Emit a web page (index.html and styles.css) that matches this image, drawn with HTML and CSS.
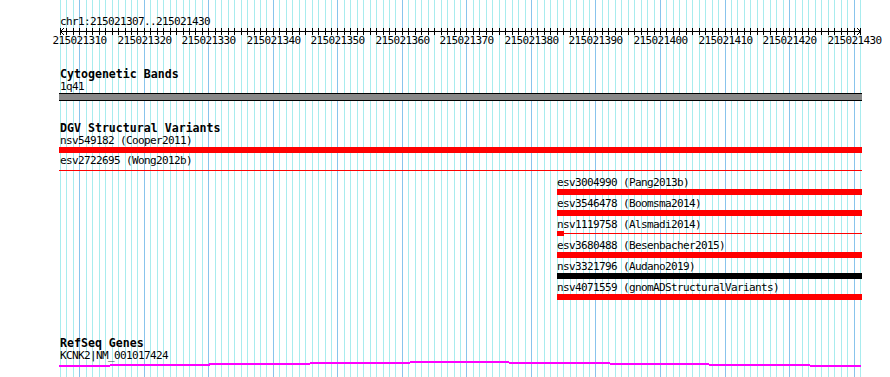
FILE: index.html
```html
<!DOCTYPE html>
<html lang="en">
<head>
  <meta charset="UTF-8">
  <meta name="viewport" content="width=device-width, initial-scale=1.0">
  <title>chr1:215021307..215021430</title>
  <link rel="stylesheet" href="styles.css">
</head>
<body>
  <div class="view">
    <!-- base pair grid, filled by script.js -->
    <svg id="grid" class="grid" width="890" height="377"></svg>

    <div class="tracks">
      <div class="location">chr1:215021307..215021430</div>
      <svg id="ruler" class="ruler" width="890" height="20">
        <line class="axis" x1="60" y1="4.5" x2="861" y2="4.5"></line>
        <polyline class="axis" points="64,1 60.5,4.5 64,8"></polyline>
        <polyline class="axis" points="857,1 860.5,4.5 857,8"></polyline>
      </svg>

      <section class="track cyto">
        <h3 class="track-title">Cytogenetic Bands</h3>
        <div class="label">1q41</div>
        <div class="band"></div>
      </section>

      <section class="track dgv">
        <h3 class="track-title">DGV Structural Variants</h3>
        <div class="feature first">
          <div class="label">nsv549182 (Cooper2011)</div>
          <div class="bar"></div>
        </div>
        <div class="feature second">
          <div class="label">esv2722695 (Wong2012b)</div>
          <div class="bar-area"><div class="thin"></div></div>
        </div>
        <div class="feature third" style="margin-left: 498px;">
          <div class="label">esv3004990 (Pang2013b)</div>
          <div class="bar"></div>
        </div>
        <div class="feature" style="margin-left: 498px;">
          <div class="label">esv3546478 (Boomsma2014)</div>
          <div class="bar"></div>
        </div>
        <div class="feature" style="margin-left: 498px;">
          <div class="label">nsv1119758 (Alsmadi2014)</div>
          <div class="bar-area">
            <div class="thin small"></div>
            <div class="block" style="width: 7px;"></div>
          </div>
        </div>
        <div class="feature" style="margin-left: 498px;">
          <div class="label">esv3680488 (Besenbacher2015)</div>
          <div class="bar"></div>
        </div>
        <div class="feature" style="margin-left: 498px;">
          <div class="label">nsv3321796 (Audano2019)</div>
          <div class="bar black"></div>
        </div>
        <div class="feature" style="margin-left: 498px;">
          <div class="label">nsv4071559 (gnomADStructuralVariants)</div>
          <div class="bar"></div>
        </div>
      </section>

      <section class="track refseq">
        <h3 class="track-title">RefSeq Genes</h3>
        <div class="label">KCNK2|NM_001017424</div>
        <svg class="gene" width="803" height="7">
          <rect x="0" y="4" width="51" height="2"></rect>
          <rect x="51" y="3" width="100" height="2"></rect>
          <rect x="150" y="2" width="101" height="2"></rect>
          <rect x="251" y="1" width="100" height="2"></rect>
          <rect x="351" y="0" width="99" height="2"></rect>
          <rect x="450" y="1" width="101" height="2"></rect>
          <rect x="551" y="2" width="99" height="2"></rect>
          <rect x="650" y="3" width="101" height="2"></rect>
          <rect x="751" y="4" width="51" height="2"></rect>
        </svg>
      </section>
    </div>
  </div>

  <script src="script.js"></script>
</body>
</html>
```

FILE: styles.css
```css
body {
  margin: 0;
  background: #fff;
  color: #000;
  font-family: "DejaVu Sans Mono", monospace;
  font-size: 11px;
  letter-spacing: -0.62px;
}
.view {
  position: relative;
  width: 890px;
  height: 377px;
  overflow: hidden;
}
.grid {
  position: absolute;
  left: 0;
  top: 0;
}
.grid line {
  stroke-width: 1;
  shape-rendering: crispEdges;
}
.grid .minor {
  stroke: #a8ecee;
}
.grid .major {
  stroke: #88c4ec;
}
.tracks {
  position: relative;
  display: flex;
  flex-direction: column;
}
.location {
  margin: 16px 0 0 60px;
  line-height: 11px;
  height: 11px;
}
.ruler {
  display: block;
}
.ruler .axis,
.ruler .tick {
  stroke: #000;
  stroke-width: 1;
  fill: none;
  shape-rendering: crispEdges;
}
.ruler .tick-label {
  font-family: "DejaVu Sans Mono", monospace;
  font-size: 11px;
  letter-spacing: -0.62px;
  text-anchor: middle;
  fill: #000;
}
.track {
  display: flex;
  flex-direction: column;
  margin-left: 59px;
  width: 803px;
  margin-top: 21px;
}
.track-title {
  margin: 0;
  padding-left: 1px;
  font-size: 11.6px;
  font-weight: bold;
  letter-spacing: 0;
  line-height: 12px;
  height: 12px;
}
.label {
  margin-top: 1px;
  padding-left: 1px;
  line-height: 11px;
  height: 11px;
  white-space: nowrap;
}
.band {
  margin-top: 1px;
  height: 6px;
  background: #888;
  border-top: 1px solid #000;
  border-bottom: 1px solid #000;
}
.feature {
  display: flex;
  flex-direction: column;
  margin-top: 3px;
}
.feature .label {
  margin-top: 0;
  padding-left: 0;
}
.feature.first {
  margin-top: 1px;
}
.feature.second {
  margin-top: 2px;
}
.feature.third {
  margin-top: 4px;
}
.feature.first .label,
.feature.second .label {
  padding-left: 1px;
}
.bar {
  margin-top: 1px;
  height: 6px;
  background: #f00;
}
.bar.black {
  background: #000;
}
.bar-area {
  position: relative;
  margin-top: 1px;
  height: 6px;
}
.thin {
  margin-top: 3px;
  height: 1px;
  background: #f00;
}
.thin.small {
  margin-top: 2px;
}
.block {
  position: absolute;
  left: 0;
  top: 0;
  height: 5px;
  background: #f00;
}
.refseq {
  margin-top: 37px;
}
.gene {
  display: block;
}
.gene rect {
  fill: #f0f;
  shape-rendering: crispEdges;
}
```

FILE: script.js
```js
const SVG_NS = 'http://www.w3.org/2000/svg';
const START = 215021307;
const END = 215021431;
const X0 = 60;
const PX_PER_BP = 6.4516;

function xFor(bp) {
  return Math.round(X0 + (bp - START) * PX_PER_BP);
}

function add(parent, tag, attrs, text) {
  const el = document.createElementNS(SVG_NS, tag);
  for (const key in attrs) el.setAttribute(key, attrs[key]);
  if (text) el.textContent = text;
  parent.appendChild(el);
  return el;
}

const grid = document.getElementById('grid');
const ruler = document.getElementById('ruler');

for (let bp = START; bp <= END; bp++) {
  const x = xFor(bp) + 0.5;
  const major = bp % 10 === 0;
  add(grid, 'line', { x1: x, y1: 0, x2: x, y2: 377, class: major ? 'major' : 'minor' });
  add(ruler, 'line', { x1: x, y1: 1, x2: x, y2: 8, class: 'tick' });
  if (major) {
    add(ruler, 'text', { x: x, y: 17, class: 'tick-label' }, String(bp));
  }
}
```
